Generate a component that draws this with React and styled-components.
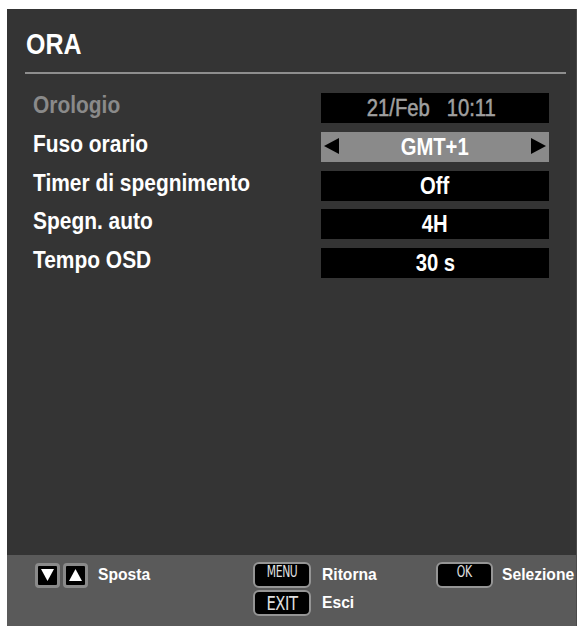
import React from "react"
import styled, { createGlobalStyle } from "styled-components"

const GlobalStyle = createGlobalStyle`
  html, body {
    margin: 0;
    padding: 0;
    background: #ffffff;
  }
  body {
    font-family: "Liberation Sans", Arial, sans-serif;
  }
`

const Page = styled.div`
  padding: 9px 0 0 7px;
  width: 584px;
  height: 626px;
  box-sizing: border-box;
  overflow: hidden;
`

const Panel = styled.div`
  width: 570px;
  height: 617px;
  background: #343434;
  border-right: 1px solid #4a4a4a;
  display: flex;
  flex-direction: column;
  box-sizing: border-box;
`

const Header = styled.div`
  padding: 20px 0 0 19px;
  height: 40px;
`

const Title = styled.h1`
  margin: 0;
  font-size: 29px;
  line-height: 30px;
  font-weight: 700;
  color: #ffffff;
  transform: scaleX(0.86);
  transform-origin: left center;
`

const Divider = styled.div`
  margin: 3px 10px 0 18px;
  height: 2px;
  background: #8e8e8e;
`

const List = styled.div`
  flex: 1;
  padding: 19px 0 0 26px;
  display: grid;
  grid-template-columns: 288px 228px;
  grid-auto-rows: 30px;
  row-gap: 8.75px;
  align-content: start;
`

const Label = styled.div`
  font-size: 23px;
  font-weight: 700;
  line-height: 30px;
  color: ${({ $dim }) => ($dim ? "#8a8a8a" : "#ffffff")};
  white-space: nowrap;
  transform: translateY(-3px) scaleX(0.91);
  transform-origin: left center;
`

const Value = styled.div`
  position: relative;
  background: ${({ $active }) => ($active ? "#8a8a8a" : "#000000")};
  color: ${({ $dim }) => ($dim ? "#a0a0a0" : "#ffffff")};
  font-size: 23px;
  font-weight: 700;
  line-height: 30px;
  text-align: center;
  white-space: pre;
`

const ValueText = styled.span`
  display: inline-block;
  transform: scaleX(${({ $dim }) => ($dim ? 0.88 : 0.88)});
  margin-left: ${({ $dim }) => ($dim ? -8 : 0)}px;
  font-weight: ${({ $dim }) => ($dim ? 400 : 700)};
  -webkit-text-stroke: ${({ $dim }) => ($dim ? "0.5px #a0a0a0" : "0")};
`

const Arrow = styled.span`
  position: absolute;
  top: 6px;
  ${({ $side }) => ($side === "left" ? "left: 3px;" : "right: 3px;")}
  width: 0;
  height: 0;
  border-top: 8px solid transparent;
  border-bottom: 8px solid transparent;
  ${({ $side }) =>
    $side === "left"
      ? "border-right: 15px solid #000;"
      : "border-left: 15px solid #000;"}
`

const Footer = styled.div`
  height: 71px;
  background: #5a5a5a;
  box-sizing: border-box;
  padding: 7px 0 0 28px;
  display: grid;
  grid-template-columns: 218px 183px 1fr;
  align-items: start;
`

const Group = styled.div`
  display: flex;
  flex-direction: column;
  gap: 2px;
`

const Hint = styled.div`
  display: flex;
  align-items: center;
  gap: ${({ $gap }) => $gap || 11}px;
  height: 26px;
`

const HintText = styled.span`
  font-size: 17px;
  font-weight: 700;
  color: #ffffff;
  white-space: nowrap;
  display: inline-block;
  transform: scaleX(0.92);
  transform-origin: left center;
`

const NavKey = styled.span`
  width: 25px;
  height: 25px;
  box-sizing: border-box;
  border: 3px solid #8a8a8a;
  border-radius: 4px;
  background: #000;
  display: flex;
  align-items: center;
  justify-content: center;
`

const NavKeys = styled.div`
  display: flex;
  gap: 3px;
`

const Key = styled.span`
  width: ${({ $w }) => $w || 58}px;
  height: 26px;
  box-sizing: border-box;
  border: 2px solid #959595;
  border-radius: 6px;
  background: #000;
  color: #e0e0e0;
  font-family: "DejaVu Sans Condensed", "Liberation Sans Narrow", "Liberation Sans", sans-serif;
  display: flex;
  align-items: center;
  justify-content: center;
  overflow: hidden;
`

const KeyLabel = styled.span`
  display: inline-block;
  font-size: ${({ $fs }) => $fs || 14}px;
  line-height: 1;
  transform: scaleX(${({ $sx }) => $sx || 0.8});
  margin-top: ${({ $mt }) => $mt || 0}px;
  letter-spacing: -0.5px;
`

const Tri = ({ up }) => (
  <svg width="15" height="14" viewBox="0 0 15 14">
    <polygon
      points={up ? "7.5,1 14,13 1,13" : "1,1 14,1 7.5,13"}
      fill="#ffffff"
    />
  </svg>
)

const rows = [
  { label: "Orologio", value: "21/Feb   10:11", dim: true },
  { label: "Fuso orario", value: "GMT+1", active: true },
  { label: "Timer di spegnimento", value: "Off" },
  { label: "Spegn. auto", value: "4H" },
  { label: "Tempo OSD", value: "30 s" },
]

export default function App() {
  return (
    <>
      <GlobalStyle />
      <Page>
        <Panel>
          <Header>
            <Title>ORA</Title>
          </Header>
          <Divider />
          <List>
            {rows.map((r) => (
              <React.Fragment key={r.label}>
                <Label $dim={r.dim}>{r.label}</Label>
                <Value $dim={r.dim} $active={r.active}>
                  {r.active && <Arrow $side="left" />}
                  <ValueText $dim={r.dim}>{r.value}</ValueText>
                  {r.active && <Arrow $side="right" />}
                </Value>
              </React.Fragment>
            ))}
          </List>
          <Footer>
            <Group>
              <Hint $gap={10}>
                <NavKeys>
                  <NavKey>
                    <Tri />
                  </NavKey>
                  <NavKey>
                    <Tri up />
                  </NavKey>
                </NavKeys>
                <HintText>Sposta</HintText>
              </Hint>
            </Group>
            <Group>
              <Hint>
                <Key>
                  <KeyLabel $fs={15} $sx={0.8} $mt={-6}>MENU</KeyLabel>
                </Key>
                <HintText>Ritorna</HintText>
              </Hint>
              <Hint>
                <Key>
                  <KeyLabel $fs={20} $sx={0.82}>EXIT</KeyLabel>
                </Key>
                <HintText>Esci</HintText>
              </Hint>
            </Group>
            <Group>
              <Hint $gap={9}>
                <Key $w={57}>
                  <KeyLabel $fs={15} $sx={0.8} $mt={-6}>OK</KeyLabel>
                </Key>
                <HintText>Selezione</HintText>
              </Hint>
            </Group>
          </Footer>
        </Panel>
      </Page>
    </>
  )
}
